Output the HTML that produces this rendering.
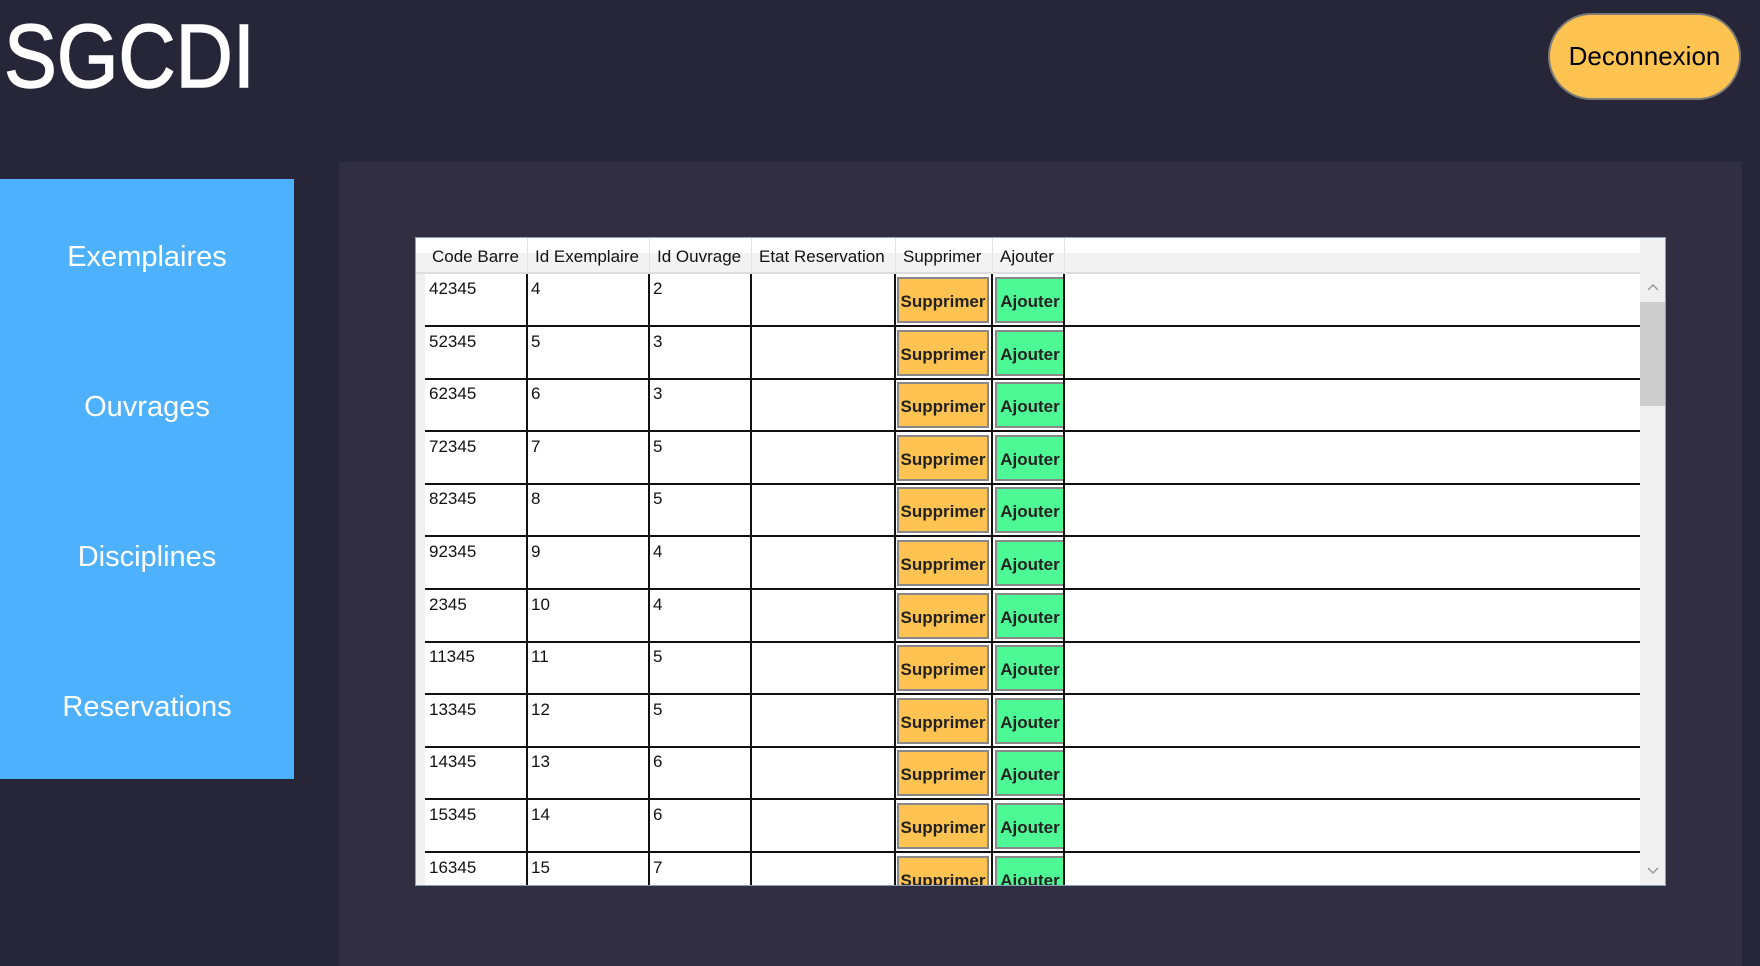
<!DOCTYPE html>
<html><head><meta charset="utf-8"><style>
*{margin:0;padding:0;box-sizing:border-box}
body{width:1760px;height:966px;background:#272538;font-family:"Liberation Sans",sans-serif;position:relative;overflow:hidden}
.title{position:absolute;left:4px;top:6px;font-size:90px;color:#fff;transform:scaleX(0.88);transform-origin:0 0;-webkit-text-stroke:1.5px #fff}
.btn{position:absolute;left:1548px;top:13px;width:193px;height:87px;background:#fec350;border:2px solid #7d7c78;border-radius:44px;font-size:26px;display:flex;align-items:center;justify-content:center;color:#000}
.side{position:absolute;left:0;top:179px;width:294px;height:600px;background:#4db1fd}
.side div{position:absolute;width:100%;text-align:center;color:#fff;font-size:29px}
.panel{position:absolute;left:339px;top:162px;width:1403px;height:804px;background:#312e42}
.tbl{position:absolute;left:415px;top:237px;width:1251px;height:649px;background:#fff;border:1px solid #8aa0bb;overflow:hidden}
.hdr{position:absolute;left:0;top:0;width:1224px;height:36px;background:linear-gradient(#fff 0,#fff 15px,#f3f3f3 15px);border-bottom:2px solid #ddd}
.hdr span{position:absolute;top:9px;font-size:17px;color:#111}
.hdr i{position:absolute;top:0;width:1px;height:36px;background:#e4e4e4}
.rowh{position:absolute;left:0;top:36px;width:9px;height:620px;background:#f0f0f0}
.row{position:absolute;left:9px;width:1215px;height:53px;border-bottom:2px solid #111}
.row span{position:absolute;top:5px;font-size:17px;color:#111}
.row i{position:absolute;top:0;width:2px;height:53px;background:#111}
.s,.a{position:absolute;top:3px;height:46px;border:2px solid #888;font-weight:bold;font-size:17px;display:flex;align-items:flex-end;justify-content:center;padding-bottom:9px;color:#222}
.s{left:886px;width:92px;background:#fec350}
.a{left:984px;width:70px;background:#4df994}
.sb{position:absolute;left:1224px;top:0;width:26px;height:649px;background:#f0f0f0}
.th{position:absolute;left:1224px;top:64px;width:26px;height:104px;background:#cdcdcd}
</style></head><body>
<div class="title">SGCDI</div>
<div class="btn">Deconnexion</div>
<div class="side">
<div style="top:62px">Exemplaires</div>
<div style="top:212px">Ouvrages</div>
<div style="top:362px">Disciplines</div>
<div style="top:512px">Reservations</div>
</div>
<div class="panel"></div>
<div class="tbl">
<div class="sb"></div><div class="th"></div>
<svg style="position:absolute;left:1230px;top:44px" width="14" height="10"><path d="M2 8 L7 3 L12 8" stroke="#999" stroke-width="1.5" fill="none"/></svg>
<svg style="position:absolute;left:1230px;top:628px" width="14" height="10"><path d="M2 2 L7 7 L12 2" stroke="#999" stroke-width="1.5" fill="none"/></svg>
<div class="hdr">
<span style="left:16px">Code Barre</span><i style="left:111px"></i>
<span style="left:119px">Id Exemplaire</span><i style="left:233px"></i>
<span style="left:241px">Id Ouvrage</span><i style="left:335px"></i>
<span style="left:343px">Etat Reservation</span><i style="left:479px"></i>
<span style="left:487px">Supprimer</span><i style="left:576px"></i>
<span style="left:584px">Ajouter</span><i style="left:648px"></i>
</div>
<div class="rowh"></div>
<div id="rows"></div>
</div>
<script>
var d=[["42345",4,2],["52345",5,3],["62345",6,3],["72345",7,5],["82345",8,5],["92345",9,4],["2345",10,4],["11345",11,5],["13345",12,5],["14345",13,6],["15345",14,6],["16345",15,7]];
var h="";d.forEach(function(r,k){var t=36+k*52.6;
h+='<div class="row" style="top:'+t+'px"><span style="left:4px">'+r[0]+'</span><i style="left:101px"></i><span style="left:106px">'+r[1]+'</span><i style="left:223px"></i><span style="left:228px">'+r[2]+'</span><i style="left:325px"></i><i style="left:469px"></i><div class="s" style="left:472px">Supprimer</div><i style="left:566px"></i><div class="a" style="left:570px">Ajouter</div><i style="left:638px"></i></div>';});
document.getElementById("rows").outerHTML=h;
</script>
</body></html>
